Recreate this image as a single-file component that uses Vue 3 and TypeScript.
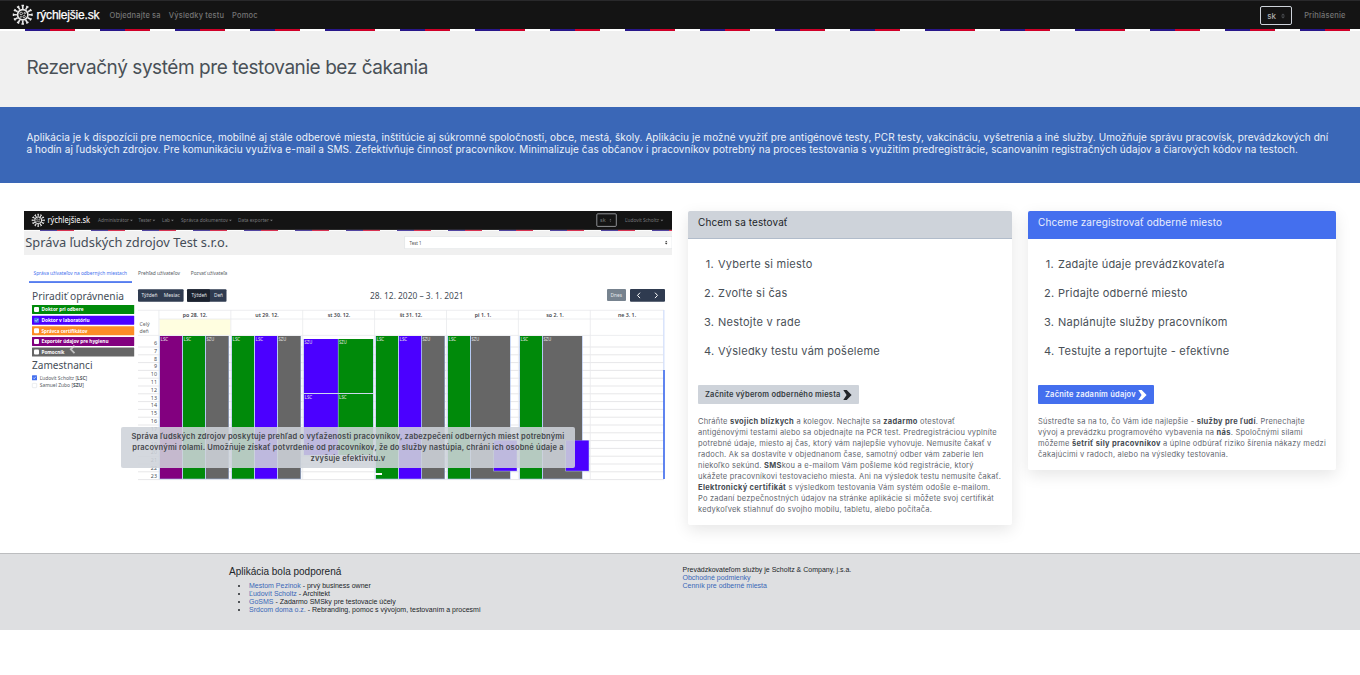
<script setup lang="ts">
interface Run { t: string; b?: boolean }

const testSteps = ['Vyberte si miesto', 'Zvoľte si čas', 'Nestojte v rade', 'Výsledky testu vám pošeleme']
const placeSteps = ['Zadajte údaje prevádzkovateľa', 'Pridajte odberné miesto', 'Naplánujte služby pracovníkom', 'Testujte a reportujte - efektívne']

const testText: Run[][] = [
  [{ t: 'Chráňte ' }, { t: 'svojich blízkych', b: true }, { t: ' a kolegov. Nechajte sa ' }, { t: 'zadarmo', b: true }, { t: ' otestovať' }],
  [{ t: 'antigénovými testami alebo sa objednajte na PCR test. Predregistráciou vyplníte' }],
  [{ t: 'potrebné údaje, miesto aj čas, ktorý vám najlepšie vyhovuje. Nemusíte čakať v' }],
  [{ t: 'radoch. Ak sa dostavíte v objednanom čase, samotný odber vám zaberie len' }],
  [{ t: 'niekoľko sekúnd. ' }, { t: 'SMS', b: true }, { t: 'kou a e-mailom Vám pošleme kód registrácie, ktorý' }],
  [{ t: 'ukážete pracovníkovi testovacieho miesta. Ani na výsledok testu nemusíte čakať.' }],
  [{ t: 'Elektronický certifikát', b: true }, { t: ' s výsledkom testovania Vám systém odošle e-mailom.' }],
  [{ t: 'Po zadaní bezpečnostných údajov na stránke aplikácie si môžete svoj certifikát' }],
  [{ t: 'kedykoľvek stiahnuť do svojho mobilu, tabletu, alebo počítača.' }],
]
const placeText: Run[][] = [
  [{ t: 'Sústreďte sa na to, čo Vám ide najlepšie - ' }, { t: 'služby pre ľudí', b: true }, { t: '. Prenechajte' }],
  [{ t: 'vývoj a prevádzku programového vybavenia na ' }, { t: 'nás', b: true }, { t: '. Spoločnými silami' }],
  [{ t: 'môžeme ' }, { t: 'šetriť sily pracovníkov', b: true }, { t: ' a úplne odbúrať riziko šírenia nákazy medzi' }],
  [{ t: 'čakajúcimi v radoch, alebo na výsledky testovania.' }],
]

const cards = [
  { kind: 'light', title: 'Chcem sa testovať', steps: testSteps, button: 'Začnite výberom odberného miesta', text: testText },
  { kind: 'primary', title: 'Chceme zaregistrovať odberné miesto', steps: placeSteps, button: 'Začnite zadaním údajov', text: placeText },
]

const supporters = [
  ['Mestom Pezinok', 'prvý business owner'],
  ['Ľudovít Scholtz', 'Architekt'],
  ['GoSMS', 'Zadarmo SMSky pre testovacie účely'],
  ['Srdcom doma o.z.', 'Rebranding, pomoc s vývojom, testovaním a procesmi'],
]

const spikes = Array.from({ length: 12 }, (_, i) => i * 30)

// Slide illustration
const menu = [
  { t: 'Administrátor', x: 98, w: 32 }, { t: 'Tester', x: 138.5, w: 14 }, { t: 'Lab', x: 162, w: 9 },
  { t: 'Správca dokumentov', x: 181, w: 48 }, { t: 'Data exporter', x: 238, w: 32 },
]
const roles = [
  { t: 'Doktor pri odbere', c: '#008a0a', w: 42 }, { t: 'Doktor v laboratóriu', c: '#4b00ff', w: 48 },
  { t: 'Správca certifikátov', c: '#fd8c25', w: 46 }, { t: 'Exportér údajov pre hygienu', c: '#82007f', w: 67 },
  { t: 'Pomocník', c: '#666', w: 23 },
]
const P = '#82007f', G = '#008a0a', K = '#666', B = '#4b00ff'
const blocks: { x: number; y: number; w: number; h: number; c: string; t: string }[] = [
  { x: 160, y: 336, w: 22, h: 142.7, c: P, t: 'LSC' }, { x: 183, y: 336, w: 22, h: 142.7, c: G, t: 'LSC' }, { x: 206, y: 336, w: 22.5, h: 142.7, c: K, t: 'SZU' },
  { x: 232, y: 336, w: 22, h: 142.7, c: G, t: 'LSC' }, { x: 255, y: 336, w: 22, h: 142.7, c: B, t: 'LSC' }, { x: 278, y: 336, w: 22.5, h: 142.7, c: K, t: 'SZU' },
  { x: 304, y: 339, w: 34, h: 54, c: B, t: 'SZU' }, { x: 338.5, y: 339, w: 34.5, h: 54, c: G, t: 'SZU' },
  { x: 304, y: 394, w: 34, h: 61, c: B, t: 'LSC' }, { x: 338.5, y: 394, w: 34.5, h: 61, c: G, t: 'LSC' },
  { x: 376, y: 336, w: 22, h: 142.7, c: G, t: 'LSC' }, { x: 399, y: 336, w: 22.3, h: 142.7, c: B, t: 'LSC' }, { x: 422, y: 336, w: 22.5, h: 142.7, c: K, t: 'SZU' },
  { x: 448, y: 336, w: 22, h: 142.7, c: G, t: 'LSC' }, { x: 471, y: 336, w: 39, h: 142.7, c: K, t: 'SZU' }, { x: 494, y: 440.5, w: 22.7, h: 30.3, c: B, t: '' },
  { x: 520, y: 336, w: 22, h: 142.7, c: G, t: 'LSC' }, { x: 543, y: 336, w: 39, h: 142.7, c: K, t: 'SZU' }, { x: 566, y: 440.5, w: 22.7, h: 30.3, c: B, t: '' },
]
const days = ['po 28. 12.', 'ut 29. 12.', 'st 30. 12.', 'št 31. 12.', 'pi 1. 1.', 'so 2. 1.', 'ne 3. 1.']
const hours = Array.from({ length: 18 }, (_, i) => ({ n: i + 6, y: 345 + i * 7.8 }))
const flags = Array.from({ length: 13 }, (_, i) => 40 + i * 51)
</script>

<template>
  <div class="page">
    <svg class="defs" aria-hidden="true">
      <symbol id="virus" viewBox="-11 -11 22 22">
        <g stroke="#e8e8e8" fill="none">
          <circle r="5.3" stroke-width="1.7" />
          <g v-for="a in spikes" :key="a" :transform="`rotate(${a})`">
            <path d="M0-6V-9.5" stroke-width="1.7" />
            <path d="M-1.3-9.5H1.3" stroke-width="1.4" />
          </g>
          <circle cx="-1.6" cy="-1.3" r="1.3" stroke-width=".8" />
          <circle cx="2" cy="-1.6" r=".8" stroke-width=".8" />
          <circle cx="1.4" cy="1.9" r="1.2" stroke-width=".8" />
          <circle cx="-1.9" cy="2.1" r=".6" stroke-width=".8" />
        </g>
      </symbol>
    </svg>

    <header class="nav">
      <a class="brand"><svg class="logo"><use href="#virus" /></svg><span>rýchlejšie.sk</span></a>
      <nav class="links"><a>Objednajte sa</a><a>Výsledky testu</a><a>Pomoc</a></nav>
      <div class="right">
        <div class="lang"><span>sk</span>
          <svg width="4" height="6" viewBox="0 0 4 6"><path d="M0 2.4L2 .4L4 2.4zM0 3.6L2 5.6L4 3.6z" fill="#4a4d51" /></svg>
        </div>
        <a>Prihlásenie</a>
      </div>
    </header>
    <div class="stripes"></div>

    <section class="hero"><h1>Rezervačný systém pre testovanie bez čakania</h1></section>
    <section class="intro">
      <p>Aplikácia je k dispozícii pre nemocnice, mobilné aj stále odberové miesta, inštitúcie aj súkromné spoločnosti, obce, mestá, školy. Aplikáciu je možné využiť pre antigénové testy, PCR testy, vakcináciu, vyšetrenia a iné služby. Umožňuje správu pracovísk, prevádzkových dní<br>a hodín aj ľudských zdrojov. Pre komunikáciu využíva e-mail a SMS. Zefektívňuje činnosť pracovníkov. Minimalizuje čas občanov i pracovníkov potrebný na proces testovania s využitím predregistrácie, scanovaním registračných údajov a čiarových kódov na testoch.</p>
    </section>

    <main class="main">
      <div class="carousel">
        <svg class="slide" width="648" height="270" viewBox="24 211 648 270">
          <rect x="24" y="211" width="648" height="19.3" fill="#141414" />
          <rect x="24" y="230.3" width="648" height="24.7" fill="#f0f0f0" />
          <rect x="24" y="229.9" width="648" height="1" fill="#fff" />
          <g v-for="f in flags" :key="f">
            <rect :x="f" y="229.9" width="17" height=".9" fill="#27178a" />
            <rect :x="f + 17" y="229.9" width="17" height=".9" fill="#d00028" />
          </g>
          <use href="#virus" x="31.2" y="213.3" width="14" height="14" />
          <text x="47.5" y="223.3" class="s-brand" textLength="42.5" lengthAdjust="spacingAndGlyphs">rýchlejšie.sk</text>
          <g fill="#77797c" font-size="5.6">
            <g v-for="m in menu" :key="m.t">
              <text :x="m.x" y="222" :textLength="m.w - 1" lengthAdjust="spacingAndGlyphs">{{ m.t }}</text>
              <path :d="`M${m.x + m.w} 219.8h2.8l-1.4 1.4z`" />
            </g>
            <text x="600" y="222">sk</text>
            <path d="M609.5 219.7l.9-1l.9 1zM609.5 220.7l.9 1l.9-1z" />
            <text x="625" y="222" textLength="34" lengthAdjust="spacingAndGlyphs">Ľudovít Scholtz</text>
            <path d="M660.5 219.8h2.8l-1.4 1.4z" />
          </g>
          <rect x="596.8" y="213.8" width="19.5" height="12.6" rx="1" fill="none" stroke="#adb0b5" stroke-width=".8" />
          <text x="25.3" y="247.3" font-size="13" fill="#454d57" textLength="203" lengthAdjust="spacingAndGlyphs">Správa ľudských zdrojov Test s.r.o.</text>
          <rect x="404.8" y="236.6" width="267.2" height="12.2" fill="#fff" stroke="#dadde1" stroke-width=".5" />
          <text x="409.5" y="244.8" font-size="5.6" fill="#555" textLength="12" lengthAdjust="spacingAndGlyphs">Test 1</text>
          <path d="M665 242.2l1.2-1.4l1.2 1.4zM665 243.1l1.2 1.4l1.2-1.4z" fill="#333" />

          <g font-size="5.4" fill="#555b63">
            <text x="33.5" y="274.8" fill="#446fee" textLength="93.5" lengthAdjust="spacingAndGlyphs">Správa užívateľov na odberných miestach</text>
            <text x="138" y="274.8" textLength="42" lengthAdjust="spacingAndGlyphs">Prehľad užívateľov</text>
            <text x="190.8" y="274.8" textLength="36.4" lengthAdjust="spacingAndGlyphs">Pozvať užívateľa</text>
          </g>
          <rect x="29" y="281.2" width="103" height="1.7" fill="#446fee" />

          <text x="32" y="300" font-size="10.4" fill="#454d57" textLength="92" lengthAdjust="spacingAndGlyphs">Priradiť oprávnenia</text>
          <g v-for="(r, i) in roles" :key="r.t">
            <rect x="32" :y="305 + i * 10.65" width="102.2" height="9" :fill="r.c" rx=".4" />
            <rect x="34" :y="307 + i * 10.65" width="5" height="5" rx="1" :fill="i === 1 ? '#446fee' : '#fff'" />
            <path v-if="i === 1" d="M35 320.2l1.2 1.2l2-2.4" stroke="#fff" stroke-width=".7" fill="none" />
            <text x="41.5" :y="311.4 + i * 10.65" font-size="5.4" font-weight="700" fill="#fff" :textLength="r.w" lengthAdjust="spacingAndGlyphs">{{ r.t }}</text>
          </g>
          <path d="M74.5 345.5l-3.7 3.8l3.7 3.8" stroke="#ddd" stroke-width="1.8" fill="none" opacity=".75" />
          <text x="32" y="369.2" font-size="10.4" fill="#454d57" textLength="60.5" lengthAdjust="spacingAndGlyphs">Zamestnanci</text>
          <rect x="32" y="375.2" width="5" height="5" rx=".5" fill="#446fee" />
          <path d="M33.2 377.6l1 1.1l1.7-2" stroke="#fff" stroke-width=".6" fill="none" />
          <rect x="32.3" y="383.3" width="4.4" height="4.4" rx=".5" fill="#fff" stroke="#d6dade" stroke-width=".5" />
          <g font-size="5.4" fill="#555b63">
            <text x="39.7" y="379.6" textLength="47.5" lengthAdjust="spacingAndGlyphs">Ľudovít Scholtz [<tspan font-weight="700">LSC</tspan>]</text>
            <text x="39.7" y="387.2" textLength="44.3" lengthAdjust="spacingAndGlyphs">Samuel Zubo [<tspan font-weight="700">SZU</tspan>]</text>
          </g>

          <rect x="138" y="289.3" width="45.6" height="12.4" rx="1" fill="#2f3b50" />
          <rect x="187" y="289.3" width="39.5" height="12.4" rx="1" fill="#2f3b50" />
          <rect x="187" y="289.3" width="23" height="12.4" rx="1" fill="#1b222e" />
          <rect x="607" y="289" width="19" height="12" rx="1" fill="#77838f" />
          <rect x="630" y="289" width="35" height="12.7" rx="1" fill="#2f3b50" />
          <g font-size="5.6" fill="#e6e9ec">
            <text x="141.5" y="297.4" textLength="16" lengthAdjust="spacingAndGlyphs">Týždeň</text>
            <text x="163.8" y="297.4" textLength="16" lengthAdjust="spacingAndGlyphs">Mesiac</text>
            <text x="191.5" y="297.4" textLength="15.5" lengthAdjust="spacingAndGlyphs">Týždeň</text>
            <text x="214" y="297.4" textLength="9" lengthAdjust="spacingAndGlyphs">Deň</text>
            <text x="610.5" y="297.2" textLength="11.5" lengthAdjust="spacingAndGlyphs">Dnes</text>
          </g>
          <path d="M640 292.7l-2.5 2.7l2.5 2.7M655 292.7l2.5 2.7l-2.5 2.7" stroke="#fff" stroke-width="1" fill="none" />
          <text x="370" y="299.3" font-size="8.8" fill="#454d57" textLength="93.5" lengthAdjust="spacingAndGlyphs">28. 12. 2020 – 3. 1. 2021</text>

          <rect x="159.5" y="319" width="71" height="16" fill="#fffee0" />
          <g stroke="#e9eaec" stroke-width=".8">
            <path d="M138 310.3H664M159 319H664M138 335.4H664" />
            <path v-for="h in hours" :key="h.n" :d="`M138 ${h.y + 2}H664`" stroke="#dcdde0" stroke-width=".7" />
            <path v-for="(d, i) in days" :key="d" :d="`M${158.9 + i * 71.9} 310V479`" />
          </g>
          <path d="M663.8 310V370.5" stroke="#d6e2fb" stroke-width="1.4" />
          <path d="M664 370V479" stroke="#446fee" stroke-width="1.7" />
          <text v-for="(d, i) in days" :key="d" :x="195 + i * 72" y="317" font-size="5.3" font-weight="600" fill="#3f454c" text-anchor="middle">{{ d }}</text>
          <text x="139.5" y="325.5" font-size="5.2" fill="#666">Celý</text>
          <text x="139.5" y="332.6" font-size="5.2" fill="#666">deň</text>
          <text v-for="h in hours" :key="h.n" x="157" :y="h.y" font-size="5.4" fill="#4b5158" text-anchor="end">{{ h.n }}</text>
          <g v-for="(b, i) in blocks" :key="i">
            <rect :x="b.x - .6" :y="b.y" :width="b.w + 1.2" :height="b.h + .5" fill="#a9c1f0" />
            <rect :x="b.x" :y="b.y" :width="b.w" :height="b.h" :fill="b.c" />
            <text v-if="b.t" :x="b.x + .6" :y="b.y + 5.2" font-size="5" fill="#e4e4e4" textLength="7.6" lengthAdjust="spacingAndGlyphs">{{ b.t }}</text>
          </g>
        </svg>
        <div class="caption">Správa ľudských zdrojov poskytuje prehľad o vyťaženosti pracovníkov, zabezpečení odberných miest potrebnými<br>pracovnými rolami. Umožňuje získať potvrdenie od pracovníkov, že do služby nastúpia, chráni ich osobné údaje a<br>zvyšuje efektivitu.v</div>
        <div class="dot"></div>
      </div>

      <article v-for="c in cards" :key="c.kind" class="card" :class="c.kind">
        <h2>{{ c.title }}</h2>
        <div class="body">
          <ol><li v-for="(s, i) in c.steps" :key="s"><span>{{ i + 1 }}.</span>{{ s }}</li></ol>
          <button type="button">{{ c.button }}
            <svg width="9" height="10" viewBox="0 0 9 10"><path d="M.3 0H3.7L8.6 5L3.7 10H.3L3.6 5z" fill="currentColor" /></svg>
          </button>
          <p><span v-for="(line, i) in c.text" :key="i" class="line"><template v-for="(r, j) in line" :key="j"><strong v-if="r.b">{{ r.t }}</strong><template v-else>{{ r.t }}</template></template></span></p>
        </div>
      </article>
    </main>

    <footer class="footer">
      <section class="support">
        <h3>Aplikácia bola podporená</h3>
        <ul><li v-for="s in supporters" :key="s[0]"><a>{{ s[0] }}</a> - {{ s[1] }}</li></ul>
      </section>
      <section class="operator">
        <div>Prevádzkovateľom služby je Scholtz &amp; Company, j.s.a.</div>
        <div><a>Obchodné podmienky</a></div>
        <div><a>Cenník pre odberné miesta</a></div>
      </section>
    </footer>
  </div>
</template>

<style scoped>
.page { width: 1360px; height: 675px; overflow: hidden; background: #fff; font-family: Inter, sans-serif; color: #495057; }
.defs { position: absolute; width: 0; height: 0; }
.nav { height: 29px; box-sizing: border-box; border-top: 1px solid #29292b; background: #141414; display: flex; align-items: center; padding: 0 14.5px 0 12px; font-size: 7.5px; font-weight: 500; letter-spacing: .16px; color: #747474; }
.brand { display: flex; align-items: center; gap: 3px; width: 97.5px; color: #fff; font: 12px/14px "Liberation Sans", sans-serif; letter-spacing: -.2px; -webkit-text-stroke: .25px #fff; white-space: nowrap; }
.logo { width: 21.5px; height: 21.5px; }
.links { display: flex; gap: 8px; padding-top: 1px; }
.right { margin-left: auto; display: flex; align-items: center; gap: 12.5px; }
.right > a { padding-top: 1px; }
.lang { box-sizing: border-box; width: 32px; height: 19px; margin-top: 1px; border: 1px solid #ced3da; border-radius: 2px; display: flex; align-items: center; justify-content: space-between; padding: 1px 6px 0 6.5px; color: #b0b0b0; font-size: 8px; }
.stripes { height: 2px; background: repeating-linear-gradient(90deg, #fff 0 25px, #27178a 25px 50px, #d00028 50px 75px); }
.hero { height: 76px; box-sizing: border-box; background: #f0f0f0; padding: 23px 26.5px 0; }
.hero h1 { margin: 0; font-size: 19px; line-height: 27px; font-weight: 400; letter-spacing: -.435px; color: #495057; }
.intro { height: 76px; box-sizing: border-box; background: #3a67b7; padding: 24px 26.5px 0; color: #eef2f9; }
.intro p { margin: 0; font-size: 10px; line-height: 12px; letter-spacing: .079px; white-space: nowrap; }
.main { height: 370px; box-sizing: border-box; padding: 28px 24px 0; display: flex; align-items: flex-start; gap: 16px; }
.carousel { position: relative; width: 648px; height: 270px; }
.slide { display: block; font-family: "Noto Sans", sans-serif; }
.s-brand { font: 9px "Noto Sans", sans-serif; fill: #fff; }
.caption { position: absolute; left: 97px; top: 216px; width: 454px; height: 41px; box-sizing: border-box; padding-top: 4px; border-radius: 2px; background: rgba(206, 211, 218, .88); text-align: center; font-size: 7.5px; line-height: 11px; font-weight: 600; letter-spacing: .2px; color: #44474b; white-space: nowrap; }
.dot { position: absolute; left: 351px; top: 262px; width: 7px; height: 2px; background: #fff; }
.card { width: 324px; border-radius: 2px; background: #fff; box-shadow: 0 5px 16px rgba(0, 0, 0, .1); }
.card.primary { width: 308px; }
.card h2 { margin: 0; height: 28px; box-sizing: border-box; padding: 4px 10px 0; border-radius: 2px 2px 0 0; border-bottom: 1px solid #b1bccb; background: #ced3da; color: #212529; font-size: 10px; line-height: 14px; font-weight: 400; letter-spacing: .085px; }
.card.primary h2 { background: #446fee; border-color: #446fee; color: #e9eefd; }
.body { padding: 11px 10px 10px; }
.body ol { list-style: none; margin: 0; padding: 0 0 0 6px; font-size: 11px; line-height: 29px; letter-spacing: .245px; }
.body li { display: flex; gap: 4px; }
.body li span { width: 10px; text-align: right; }
.body button { display: flex; align-items: center; gap: 2px; margin: 19px 0 12px; height: 19px; padding: 0 7px; border: 0; border-radius: 1px; background: #ced3da; color: #343a40; font: 600 7.5px/11px Inter, sans-serif; letter-spacing: .215px; white-space: nowrap; }
.body button svg { color: #212529; }
.card.primary button { background: #446fee; color: #f0f4ff; }
.card.primary button svg { color: #fff; }
.body p { margin: 0; font-size: 7.5px; line-height: 11px; letter-spacing: .21px; color: #5f666e; }
.body strong { font-weight: 700; letter-spacing: .32px; color: #454b52; }
.line { display: block; white-space: pre; }
.footer { height: 77px; box-sizing: border-box; border-top: 1px solid #bcbdbf; background: #dedfe1; padding-left: 229px; display: flex; font: 7px/8px "Liberation Sans", sans-serif; color: #212529; }
.footer a { color: #3a67b7; }
.support { width: 453.5px; padding-top: 12px; }
.support h3 { margin: 0 0 4px; font-size: 10px; line-height: 12px; font-weight: 400; }
.support ul { margin: 0; padding-left: 20px; }
.operator { padding-top: 12px; }
</style>

<style>
body { margin: 0; }
</style>
